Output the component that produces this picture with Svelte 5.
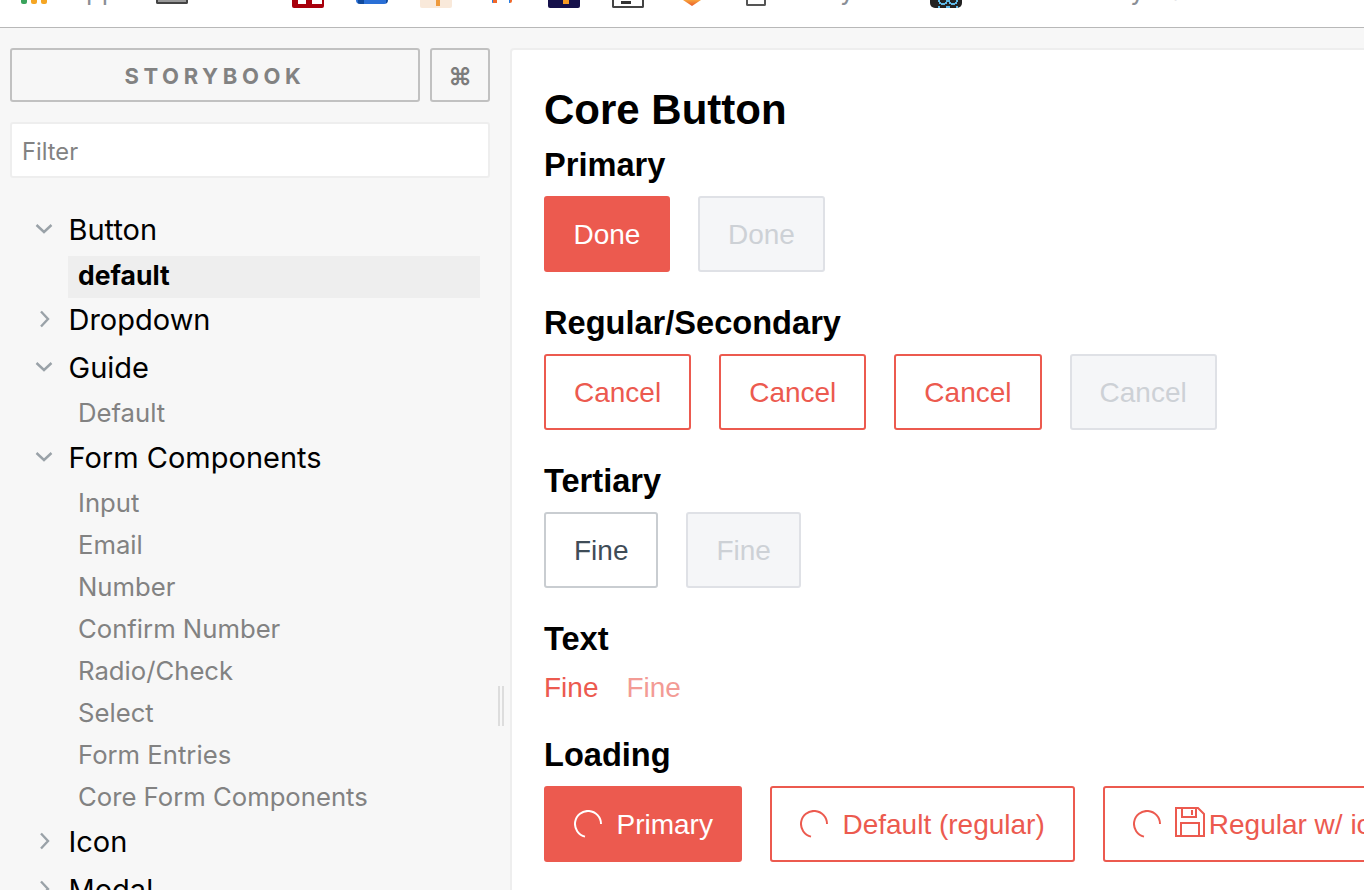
<script>
	// bottom edge of the browser bookmarks bar, only the last few pixels show
	const favs = [
		{ gap: 21, w: 6, h: 4, bg: '#3aa35c' },
		{ gap: 4, w: 6, h: 4, bg: '#f5a623' },
		{ gap: 4, w: 6, h: 4, bg: '#f5a623' },
		{ gap: 21, w: 72, label: 'Apps' },
		{ gap: 16, w: 32, h: 4, bg: '#999', line: '#444' },
		{ gap: 22, w: 82, label: 'Code', faint: true },
		{ gap: 0, w: 32, h: 8, bg: '#a8000c', kind: 'red' },
		{ gap: 32, w: 32, h: 4, bg: '#2a6fd6', kind: 'blue' },
		{ gap: 32, w: 32, h: 8, bg: '#f9e9da', kind: 'peach' },
		{ gap: 39, w: 21, h: 3, kind: 'cross' },
		{ gap: 36, w: 32, h: 8, bg: '#15104a', kind: 'navy' },
		{ gap: 32, w: 32, h: 8, bg: '#fff', line: '#444', kind: 'doc' },
		{ gap: 39, w: 18, h: 6, kind: 'fox' },
		{ gap: 45, w: 20, h: 6, bg: '#fff', line: '#555' },
		{ gap: 28, w: 96, label: 'Daily Fin' },
		{ gap: 40, w: 32, h: 8, bg: '#222', kind: 'loop' },
		{ gap: 36, w: 200, label: 'Reader Mayo Shell' }
	]

	const forms = ['Input', 'Email', 'Number', 'Confirm Number', 'Radio/Check', 'Select', 'Form Entries', 'Core Form Components']
</script>

{#snippet down()}
	<svg class="arrow" viewBox="0 0 18 18"><path d="M1.5 5 9 12l7.5-7" /></svg>
{/snippet}

{#snippet right()}
	<svg class="arrow" viewBox="0 0 18 18"><path d="M6 1.5l7 7.5-7 7.5" /></svg>
{/snippet}

{#snippet spinner()}
	<svg class="spinner" viewBox="0 0 28 28"><path d="M27 14A13 13 0 1 0 11 26.6" /></svg>
{/snippet}

<div class="page">
	<div class="bookmarks">
		{#each favs as f}
			{#if f.label}
				<span class="mark" class:faint={f.faint} style="margin-left:{f.gap}px;width:{f.w}px">{f.label}</span>
			{:else}
				<span
					class="fav {f.kind || ''}"
					style="margin-left:{f.gap}px;width:{f.w}px;height:{f.h}px;background:{f.bg || 'none'};border-color:{f.line || 'transparent'}"
				></span>
			{/if}
		{/each}
	</div>

	<div class="shell">
		<aside class="sidebar">
			<div class="brand">
				<button class="logo">STORYBOOK</button>
				<button class="shortcut">⌘</button>
			</div>
			<input class="filter" placeholder="Filter" />

			<nav class="tree">
				<div class="kind">{@render down()}<span>Button</span></div>
				<div class="stories first">
					<div class="story active">default</div>
				</div>

				<div class="kind closed">{@render right()}<span>Dropdown</span></div>

				<div class="kind">{@render down()}<span>Guide</span></div>
				<div class="stories">
					<div class="story">Default</div>
				</div>

				<div class="kind">{@render down()}<span>Form Components</span></div>
				<div class="stories">
					{#each forms as name}
						<div class="story">{name}</div>
					{/each}
				</div>

				<div class="kind closed">{@render right()}<span>Icon</span></div>
				<div class="kind closed">{@render right()}<span>Modal</span></div>
			</nav>
		</aside>

		<div class="handle"></div>

		<main class="preview">
			<h1>Core Button</h1>

			<h2>Primary</h2>
			<div class="row">
				<button class="btn primary">Done</button>
				<button class="btn disabled">Done</button>
			</div>

			<h2>Regular/Secondary</h2>
			<div class="row">
				<button class="btn regular">Cancel</button>
				<button class="btn regular">Cancel</button>
				<button class="btn regular">Cancel</button>
				<button class="btn disabled">Cancel</button>
			</div>

			<h2>Tertiary</h2>
			<div class="row">
				<button class="btn tertiary">Fine</button>
				<button class="btn disabled">Fine</button>
			</div>

			<h2>Text</h2>
			<div class="row text-row">
				<span>Fine</span>
				<span class="faded">Fine</span>
			</div>

			<h2>Loading</h2>
			<div class="row">
				<button class="btn primary">
					{@render spinner()}
					Primary
				</button>
				<button class="btn regular">
					{@render spinner()}
					Default (regular)
				</button>
				<button class="btn regular">
					{@render spinner()}
					<svg class="floppy" viewBox="0 0 30 30"><path d="M1 1h22l6 6v22H1z" /><path d="M7 1v9h14V1M17 3v5M6 29V16h18v13" /></svg>
					Regular w/ icon
				</button>
			</div>
		</main>
	</div>
</div>

<style>
	:global(body) {
		overflow: hidden;
		background: #fff;
	}

	.page {
		width: 1364px;
		height: 890px;
		overflow: hidden;
		display: flex;
		flex-direction: column;
		font-family: Inter, "Liberation Sans", sans-serif;
	}

	.bookmarks {
		height: 27px;
		flex: none;
		display: flex;
		align-items: flex-start;
		overflow: hidden;
		background: #fff;
		border-bottom: 1px solid #b8b8b8;
	}

	.fav {
		flex: none;
		box-sizing: border-box;
		display: block;
		position: relative;
		border: 0 solid transparent;
		border-width: 0 2px 2px;
		border-radius: 0 0 2px 2px;
	}

	.fav.red {
		background: linear-gradient(90deg, #a8000c 4px, #fff 4px 12px, #a8000c 12px 18px, #fff 18px 28px, #a8000c 28px) top / 100% 4px no-repeat, #a8000c !important;
	}

	.fav.blue {
		background: linear-gradient(90deg, #0f4a9e 6px, #2a6fd6 6px) !important;
		border-radius: 0 0 6px 6px;
	}

	.fav.peach {
		background: linear-gradient(90deg, transparent 14px, #ee9a3c 14px 18px, transparent 18px) top / 100% 6px no-repeat, #f9e9da !important;
	}

	.fav.cross {
		background: linear-gradient(90deg, #f0682a 4px, transparent 4px 16px, #2a7de1 16px) !important;
	}

	.fav.navy {
		background: linear-gradient(90deg, transparent 13px, #f59a23 13px 19px, transparent 19px) top / 100% 4px no-repeat, #15104a !important;
	}

	.fav.doc {
		background: linear-gradient(90deg, transparent 7px, #333 7px 17px, transparent 17px) 0 1px / 100% 3px no-repeat, #fff !important;
	}

	.fav.fox {
		background: linear-gradient(180deg, #f7a23b, #ea5a2a) !important;
		clip-path: polygon(0 0, 100% 0, 50% 100%);
		border: none;
	}

	.fav.loop {
		background: radial-gradient(circle at 11px 0, transparent 3px, #5fb8e6 3px 5px, transparent 5px), radial-gradient(circle at 21px 0, transparent 3px, #5fb8e6 3px 5px, transparent 5px), #222 !important;
		border-radius: 0 0 5px 5px;
	}

	.mark {
		flex: none;
		font-size: 26px;
		line-height: 28px;
		margin-top: -23px;
		white-space: nowrap;
		color: #8a8f96;
		overflow: hidden;
		height: 30px;
	}

	.mark.faint {
		color: #ccc;
	}

	.shell {
		flex: 1;
		display: flex;
		position: relative;
		overflow: hidden;
		background: #f7f7f7;
		min-height: 0;
	}

	.sidebar {
		width: 480px;
		flex: none;
		padding: 20px 0 0 10px;
	}

	.brand {
		display: flex;
		gap: 10px;
	}

	button {
		font-family: inherit;
	}

	.logo,
	.shortcut {
		height: 54px;
		background: transparent;
		border: 2px solid #c1c1c1;
		border-radius: 3px;
		color: #828282;
		font-weight: 700;
		padding: 2px 0 0;
	}

	.logo {
		width: 410px;
		font-size: 22px;
		letter-spacing: 4.6px;
	}

	.shortcut {
		width: 60px;
		font-size: 24px;
		color: #7c7c7c;
	}

	.filter {
		display: block;
		box-sizing: border-box;
		width: 480px;
		height: 56px;
		margin-top: 20px;
		padding: 2px 10px 0;
		border: 2px solid #eee;
		border-radius: 3px;
		background: #fff;
		font-family: inherit;
		font-size: 23.7px;
		outline: none;
	}

	.filter::placeholder {
		color: #828282;
		opacity: 1;
	}

	.tree {
		margin-top: 30px;
	}

	.kind {
		display: flex;
		align-items: center;
		height: 42px;
		font-size: 29px;
		color: #000;
	}

	.kind.closed {
		margin-bottom: 6px;
	}

	.arrow {
		width: 18px;
		height: 18px;
		flex: none;
		margin: 0 15.5px 0 25px;
		fill: none;
		stroke: #9aa2a8;
		stroke-width: 2.4;
	}

	.stories {
		margin: 4px 0 2px;
	}

	.stories.first {
		margin: 6px 0 0;
	}

	.story {
		box-sizing: border-box;
		width: 412px;
		height: 42px;
		margin-left: 58px;
		padding: 0 0 2px 10px;
		display: flex;
		align-items: center;
		font-size: 25.7px;
		color: #828282;
	}

	.story.active {
		padding-bottom: 4px;
		background: #eee;
		color: #000;
		font-weight: 700;
		font-size: 26.5px;
	}

	.handle {
		position: absolute;
		left: 498px;
		top: 658px;
		width: 6px;
		height: 40px;
		box-sizing: border-box;
		border-left: 2px solid #ddd;
		border-right: 2px solid #ddd;
	}

	.preview {
		flex: 1;
		margin: 20px -10px -10px 20px;
		padding: 37px 0 0 32px;
		background: #fff;
		border: 2px solid #eee;
		border-radius: 4px 0 0 0;
		font-family: "Liberation Sans", Arial, sans-serif;
		min-width: 0;
		white-space: nowrap;
	}

	h1 {
		margin: 0 0 13px;
		font-size: 42px;
		line-height: 46px;
		font-weight: 700;
		color: #000;
	}

	h2 {
		margin: 0;
		padding-top: 1px;
		font-size: 32.6px;
		line-height: 36px;
		font-weight: 700;
		color: #000;
	}

	.row {
		display: flex;
		gap: 28px;
		margin: 13px 0 32px;
	}

	.btn {
		height: 76px;
		padding: 2px 28px 0;
		box-sizing: border-box;
		display: flex;
		align-items: center;
		border-radius: 3px;
		font-size: 28px;
		font-family: "Liberation Sans", Arial, sans-serif;
		flex: none;
	}

	.primary {
		padding: 2px 27.5px 0;
		background: #ec5a4f;
		border: 2px solid #ec5a4f;
		color: #fff;
	}

	.regular {
		background: #fff;
		border: 2px solid #ec5a4f;
		color: #ec5a4f;
	}

	.tertiary {
		background: #fff;
		border: 2px solid #c9cdd1;
		color: #3f4c57;
	}

	.disabled {
		background: #f5f6f8;
		border: 2px solid #dfe1e6;
		color: #cdd1d6;
	}

	.text-row {
		margin-top: 15px;
		font-size: 28px;
		color: #ec5a4f;
		line-height: 32px;
	}

	.faded {
		opacity: 0.6;
	}

	.spinner {
		width: 28px;
		height: 28px;
		flex: none;
		margin: -2px 14px 0 0;
		fill: none;
		stroke: currentColor;
		stroke-width: 2;
	}

	.primary .spinner {
		margin-right: 15px;
	}

	.floppy {
		width: 30px;
		height: 30px;
		flex: none;
		margin: -6px 4px 0 0;
		fill: none;
		stroke: currentColor;
		stroke-width: 2;
	}
</style>
